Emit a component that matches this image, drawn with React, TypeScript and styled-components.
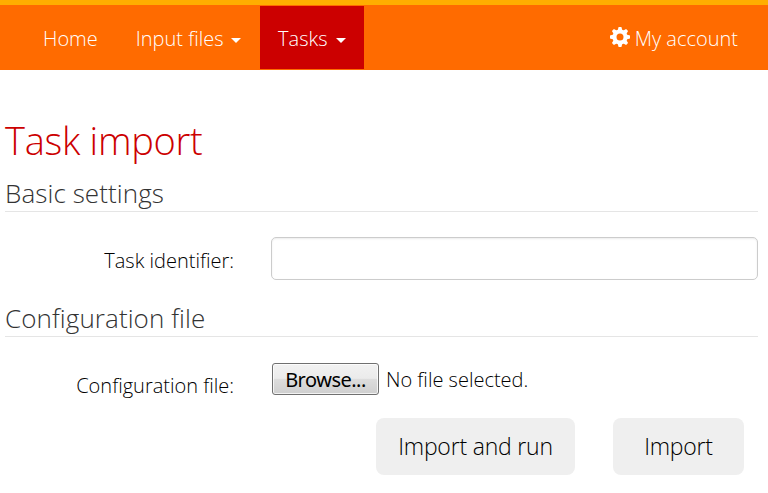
import React from "react";
import styled, { createGlobalStyle } from "styled-components";

const Global = createGlobalStyle`
  * { box-sizing: border-box; }
  body { margin: 0; background: #fff; font-family: "Open Sans", sans-serif; font-weight: 300; color: #000; }
`;
const Page = styled.div`height: 493px; overflow: hidden;`;
const Navbar = styled.nav`
  height: 70px; border-top: 5px solid #ffae00; background: #ff6b00;
  display: flex; align-items: stretch; padding: 0 11px 0 24px;
`;
const NavItem = styled.a<{ $active?: boolean; $end?: boolean }>`
  display: flex; align-items: center; color: #fff; font-size: 20px; line-height: 27px;
  padding: 2px ${p => (p.$active ? 18.5 : 19)}px 0;
  margin: 1px 0 1px ${p => (p.$end ? "auto" : "0")};
  background: ${p => (p.$active ? "#cc0000" : "transparent")};
`;
const Caret = styled.span<{ $gap: number }>`
  border: 5px solid transparent; border-top-color: #fff; border-bottom: 0; margin: 3px 0 0 ${p => p.$gap}px;
`;
const Gear = styled.svg`width: 20px; height: 20px; margin: -4px 5px 0 0;`;
const Content = styled.main`padding: 44px 10px 0 5px;`;
const Title = styled.h1`
  margin: 0; font-size: 38px; line-height: 53px; height: 54px; font-weight: 300; color: #c00; letter-spacing: -0.28px;
`;
const Section = styled.h2`
  margin: 0; height: 44px; padding-top: 7px; font-size: 26px; line-height: 36px; font-weight: 300; color: #333;
  border-bottom: 1px solid #e5e5e5; letter-spacing: 0.08px;
`;
const Row = styled.div<{ $top: number; $height: number }>`
  display: grid; grid-template-columns: 229px 1fr; column-gap: 37px;
  padding-top: ${p => p.$top}px; height: ${p => p.$height}px;
`;
const Label = styled.label`font-size: 20px; line-height: 27px; text-align: right; padding-top: 10px;`;
const TextInput = styled.input`
  height: 43px; border: 1px solid #ccc; border-radius: 5px; width: 100%; outline: 0;
  box-shadow: inset 0 1px 2px rgba(0, 0, 0, 0.08);
`;
const FileField = styled.div`display: flex; align-items: center; height: 33px; padding-left: 1px; font-size: 20px;`;
const FileStatus = styled.span`padding-top: 1px;`;
const Browse = styled.button`
  width: 107px; height: 32px; border: 1px solid #707070; border-radius: 3px; padding: 2px 0 0; margin-right: 7px;
  background: linear-gradient(#f2f2f2, #ebebeb 48%, #dddddd 50%, #cfcfcf); color: #000;
  box-shadow: inset 0 0 0 1px rgba(255, 255, 255, 0.75);
  font: 400 20px/27px "Noto Sans", sans-serif; letter-spacing: -0.5px;
`;
const Actions = styled.div`display: flex; justify-content: flex-end; gap: 38px; padding-right: 14px;`;
const Action = styled.button<{ $width: number }>`
  width: ${p => p.$width}px; height: 57px; border: 0; border-radius: 8px; background: #efefef;
  font: 300 23px "Open Sans", sans-serif; color: #000; padding: 0 0 2px; letter-spacing: -0.2px;
`;

export default function App() {
  return (
    <Page>
      <Global />
      <Navbar>
        <NavItem>Home</NavItem>
        <NavItem>Input files<Caret $gap={7} /></NavItem>
        <NavItem $active>Tasks<Caret $gap={8.5} /></NavItem>
        <NavItem $end>
          <Gear viewBox="0 0 20 20" fill="none" stroke="#fff">
            <circle cx="10" cy="10" r="5.5" strokeWidth="4" />
            {[0, 45, 90, 135].map(angle => (
              <path
                key={angle}
                fill="#fff"
                stroke="none"
                d="M7.6 3.5 8.6 0h2.8l1 3.5zM7.6 16.5l1 3.5h2.8l1-3.5z"
                transform={`rotate(${angle} 10 10)`}
              />
            ))}
          </Gear>
          My account
        </NavItem>
      </Navbar>
      <Content>
        <Title>Task import</Title>
        <Section>Basic settings</Section>
        <Row $top={25} $height={81}><Label htmlFor="task">Task identifier:</Label><TextInput id="task" /></Row>
        <Section>Configuration file</Section>
        <Row $top={25} $height={81}>
          <Label>Configuration file:</Label>
          <FileField><Browse>Browse...</Browse><FileStatus>No file selected.</FileStatus></FileField>
        </Row>
        <Actions><Action $width={199}>Import and run</Action><Action $width={131}>Import</Action></Actions>
      </Content>
    </Page>
  );
}
